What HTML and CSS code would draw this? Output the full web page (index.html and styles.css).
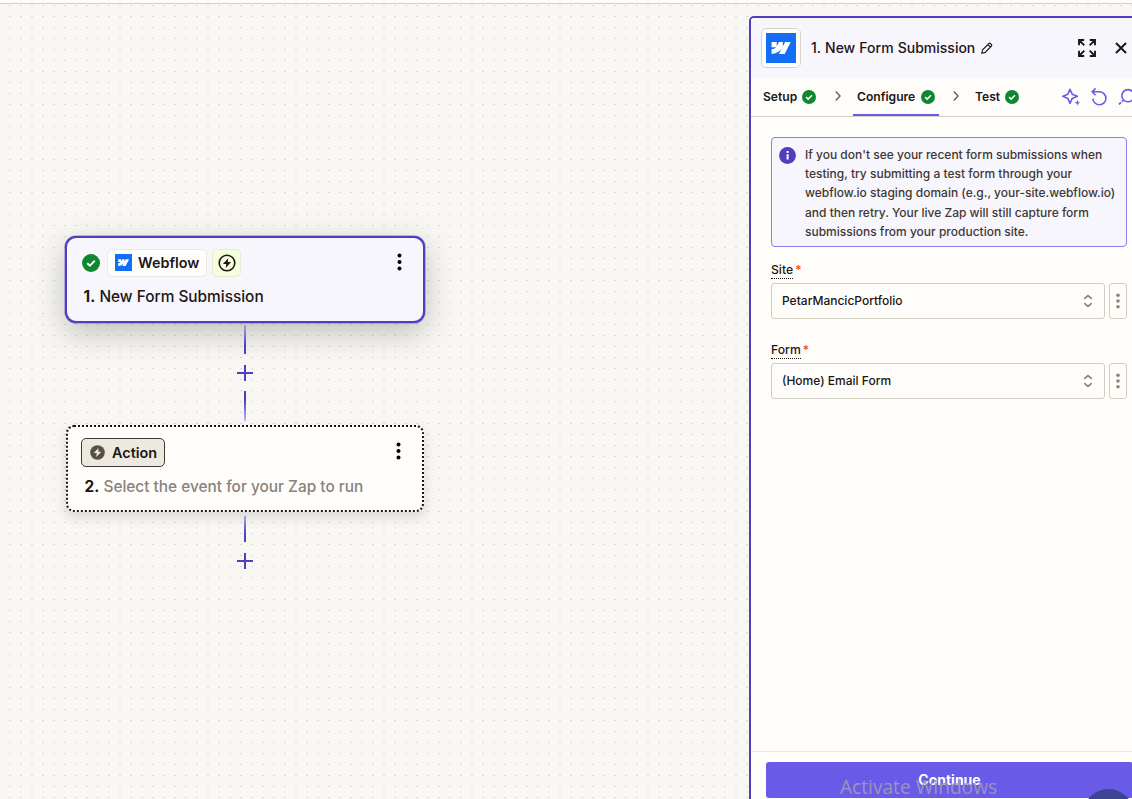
FILE: index.html
```html
<!DOCTYPE html>
<html lang="en">
<head>
<meta charset="utf-8">
<title>Zap editor</title>
<link rel="stylesheet" href="styles.css">
</head>
<body>
<svg class="defs" aria-hidden="true">
  <symbol id="check" viewBox="0 0 18 18"><circle cx="9" cy="9" r="9" fill="#0f8730"/><path d="M5.3 9.2l2.6 2.5 4.9-5" fill="none" stroke="#fff" stroke-width="1.9"/></symbol>
  <symbol id="webflow" viewBox="0 0 30 30"><path d="M0 0h30v30H0z" fill="#146ef5"/><path transform="translate(5.6 5.5) scale(.8)" fill="#fff" d="M24 4.515l-7.658 14.97H9.149l3.205-6.204h-.144C9.566 16.713 5.621 18.973 0 19.485v-6.118s3.596-.213 5.71-2.435H0V4.515h6.417v5.278l.144-.001 2.622-5.277h4.854v5.244h.144l2.72-5.244H24z"/></symbol>
  <symbol id="dots" viewBox="0 0 4 18"><circle cx="2" cy="2.5" r="2"/><circle cx="2" cy="9" r="2"/><circle cx="2" cy="15.5" r="2"/></symbol>
  <symbol id="plus" viewBox="0 0 16 16"><path d="M8 0v16M0 8h16" stroke="#503ebd" stroke-width="2"/></symbol>
  <symbol id="chevron" viewBox="0 0 6 10"><path d="M.8.6L5 5 .8 9.4" fill="none" stroke="#666059" stroke-width="1.4"/></symbol>
  <symbol id="updown" viewBox="0 0 10 14"><path d="M1.2 4.8L5 1.6l3.8 3.2M1.2 9.2L5 12.4l3.8-3.2" fill="none" stroke="#88827e" stroke-width="1.6"/></symbol>
</svg>
<div class="topbar"></div>
<main class="editor">
  <section class="canvas">
    <article class="step selected">
      <div class="step-head">
        <svg class="status"><use href="#check"/></svg>
        <span class="app"><svg><use href="#webflow"/></svg>Webflow</span>
        <span class="trigger"><svg viewBox="0 0 18 18"><circle cx="9" cy="9" r="7.8" fill="none" stroke="#201515" stroke-width="1.6"/><path d="M10.2 4.2L4.9 10h3.3l-.5 3.9L13.1 8H9.8z" fill="#201515"/></svg></span>
        <svg class="more"><use href="#dots"/></svg>
      </div>
      <p class="step-title"><b>1.</b> New Form Submission</p>
    </article>
    <div class="line in"></div>
    <svg class="add"><use href="#plus"/></svg>
    <div class="line out"></div>
    <article class="step empty">
      <div class="step-head">
        <span class="action"><svg viewBox="0 0 15 15"><circle cx="7.5" cy="7.5" r="7.3" fill="#574e4c"/><path d="M8.5 3L3.7 8.1h3l-.4 3.9 5-5.2h-3z" fill="#ece9df"/></svg>Action</span>
        <svg class="more"><use href="#dots"/></svg>
      </div>
      <p class="step-title"><b>2.</b> Select the event for your Zap to run</p>
    </article>
    <div class="line in short"></div>
    <svg class="add"><use href="#plus"/></svg>
  </section>
  <aside class="panel">
    <header class="panel-head">
      <span class="logo"><svg><use href="#webflow"/></svg></span>
      <h1>1. New Form Submission</h1>
      <svg class="pencil" viewBox="0 0 12 12"><path d="M.8 11.2l.8-3.3L8 1.5a1 1 0 0 1 1.4 0l1.1 1.1a1 1 0 0 1 0 1.4L4.1 10.4zM7 2.7L9.3 5" fill="none" stroke="#201515" stroke-width="1.1"/></svg>
      <svg class="expand" viewBox="0 0 18 18"><path d="M6.2 1H1v5.2M1 1l5.3 5.3M11.8 1H17v5.2M17 1l-5.3 5.3M1 11.8V17h5.2M1 17l5.3-5.3M17 11.8V17h-5.2M17 17l-5.3-5.3" fill="none" stroke="#201515" stroke-width="1.9"/></svg>
      <svg class="close" viewBox="0 0 12 12"><path d="M1 1l10 10M11 1L1 11" stroke="#201515" stroke-width="2"/></svg>
    </header>
    <nav class="tabs">
      <span class="tab setup">Setup<svg><use href="#check"/></svg></span>
      <svg class="sep"><use href="#chevron"/></svg>
      <span class="tab active">Configure<svg><use href="#check"/></svg></span>
      <svg class="sep"><use href="#chevron"/></svg>
      <span class="tab test">Test<svg><use href="#check"/></svg></span>
      <span class="tools">
        <svg class="tool" viewBox="0 0 18 18"><path d="M8 1.4L10.2 6.2 15.4 8.3 10.2 10.4 8 15.3 5.8 10.4.9 8.3 5.8 6.2z" fill="none" stroke="#695be8" stroke-width="1.6" stroke-linejoin="round"/><path d="M15.4 12l.8 2.1 2 .7-2 .8-.8 2-.8-2-2-.8 2-.7z" fill="#695be8"/></svg>
        <svg class="tool" viewBox="0 0 18 18"><path d="M2.4 3.8h7.3a6.5 6.5 0 1 1-6.8 6.8M5.6.4L2.2 3.8l3.4 3.4" fill="none" stroke="#695be8" stroke-width="1.6"/></svg>
        <svg class="tool" viewBox="0 0 18 18"><circle cx="10" cy="7.7" r="6.1" fill="none" stroke="#695be8" stroke-width="1.6"/><path d="M5.2 12.4L4 13.6M3 14.4l-2 2" stroke="#695be8" stroke-width="1.8"/></svg>
      </span>
    </nav>
    <div class="form">
      <div class="notice">
        <svg viewBox="0 0 17 17"><circle cx="8.5" cy="8.5" r="8.4" fill="#503ebd"/><path d="M7.6 4h2v2h-2zM7.6 7.2h2v5.4h-2z" fill="#fff"/></svg>
        <p>If you don't see your recent form submissions when<br>testing, try submitting a test form through your<br>webflow.io staging domain (e.g., your-site.webflow.io)<br>and then retry. Your live Zap will still capture form<br>submissions from your production site.</p>
      </div>
      <div class="field">
        <div class="label"><span>Site</span><i>*</i></div>
        <div class="row"><div class="select">PetarMancicPortfolio<svg><use href="#updown"/></svg></div><div class="menu"><svg><use href="#dots"/></svg></div></div>
      </div>
      <div class="field">
        <div class="label"><span>Form</span><i>*</i></div>
        <div class="row"><div class="select">(Home) Email Form<svg><use href="#updown"/></svg></div><div class="menu"><svg><use href="#dots"/></svg></div></div>
      </div>
    </div>
    <footer class="panel-foot"><button class="continue">Continue</button></footer>
  </aside>
</main>
<div class="watermark">Activate Windows</div>
<svg class="help" viewBox="0 0 49 10"><circle cx="25.5" cy="25.5" r="25.5" fill="#3d4592"/></svg>
</body>
</html>
```
FILE: styles.css
```css
* { box-sizing: border-box; }
html { overflow: hidden; }
body { margin: 0; width: 1132px; height: 799px; overflow: hidden; position: relative; display: flex; flex-direction: column; font-family: Inter, "Liberation Sans", sans-serif; color: #201515; background: #f8f7f3; }
svg { display: block; flex: none; }
p, h1 { margin: 0; }
.defs { width: 0; height: 0; position: absolute; }
.topbar { height: 4px; flex: none; background: #fffdf9; border-bottom: 1px solid #d0cfcb; }
.editor {
  flex: 1; min-height: 0; display: flex;
  background-image: radial-gradient(ellipse 1.2px .7px at 1px .5px, #dad9d5 99%, transparent 100%);
  background-size: 11px 11px; background-position: 9px 1px;
}
.canvas { width: 749px; padding: 232px 0 0 65px; display: flex; flex-direction: column; flex: none; }
.step { width: 360px; height: 87px; flex: none; }
.selected { border: 2px solid #503ebd; border-radius: 11px; background: #f7f6fd; box-shadow: 0 0 0 .5px #8577d4, 0 10px 30px rgba(55,50,40,.28); padding: 11px 15px; }
.empty { width: 358px; height: 87px; margin: 4px 0 0 1px; border: 2px dotted #201515; border-radius: 8px; background: #fffdf9; box-shadow: 0 5px 12px rgba(55,50,40,.16); padding: 11px 13px; }
.step-head { display: flex; align-items: center; height: 28px; }
.status { width: 18px; height: 18px; }
.app { height: 28px; width: 100px; margin-left: 7px; padding: 0 0 1px 7px; border: 1px solid #ebe9e4; border-radius: 5px; background: #fffdf9; display: flex; align-items: center; gap: 6px; font-size: 14.4px; font-weight: 600; }
.app svg { width: 17px; height: 17px; }
.trigger { width: 29px; height: 28px; margin-left: 5px; border: 1px solid #e9ebd5; border-radius: 5px; background: #f4ffdd; display: flex; align-items: center; justify-content: center; }
.trigger svg { width: 18px; height: 18px; }
.more { width: 5px; height: 18px; margin: -3px 6.5px 0 auto; }
.empty .more { margin-right: 8.5px; }
.step-title { font-size: 15.4px; line-height: 20px; margin: 10px 0 0 1.5px; font-weight: 500; white-space: nowrap; }
.step-title b { font-weight: 700; }
.empty .step-title { color: #88827e; margin: 11px 0 0 3.5px; }
.empty .step-title b { color: #201515; }
.action { width: 84px; height: 29px; border: 1px solid #403635; border-radius: 5px; background: #ece9df; display: flex; align-items: center; gap: 7px; padding-left: 8px; font-size: 14.4px; font-weight: 600; }
.action svg { width: 15px; height: 15px; }
.line { width: 2px; height: 29px; margin: 2px 0 0 179px; flex: none; }
.line.in { background: linear-gradient(#aaa0e8, #503ebd 70%); }
.line.out { height: 30px; margin-top: 10px; background: linear-gradient(#503ebd 30%, #c0b9ff); }
.line.short { height: 26px; margin-top: 4px; }
.add { width: 16px; height: 16px; margin: 11px 0 0 172px; }
.panel { flex: none; width: 400px; margin-top: 12px; border: 2px solid #503ebd; border-radius: 5px 0 0 0; border-bottom: 0; background: #fffdf9; display: flex; flex-direction: column; overflow: hidden; }
.panel-head { height: 60px; flex: none; background: #f7f6fd; display: flex; align-items: center; padding-left: 10px; }
.logo { width: 40px; height: 40px; border: 1px solid #d7d3c9; border-radius: 5px; background: #fffdf9; padding: 4px; }
.logo svg { width: 30px; height: 30px; }
h1 { font-size: 14px; line-height: 18px; font-weight: 500; margin: -1px 0 0 10px; width: 164px; word-spacing: .4px; white-space: nowrap; }
.pencil { width: 12px; height: 12px; margin-left: 6px; }
.expand { width: 18px; height: 18px; margin-left: 85px; }
.close { width: 12px; height: 12px; margin-left: 19px; }
.tabs { height: 39px; flex: none; border-bottom: 1px solid #d7d3c9; display: flex; padding-left: 8px; }
.tab { display: flex; align-items: center; justify-content: space-between; height: 38px; padding: 0 4px 1px; font-size: 12.1px; font-weight: 600; flex: none; }
.tab svg { width: 14px; height: 14px; margin-top: 1px; }
.setup { width: 61px; }
.active { width: 86px; box-shadow: inset 0 -2px #695be8; }
.test { width: 52px; }
.sep { width: 6px; height: 10px; margin: 13px 12px 0 15px; }
.active + .sep { margin: 13px 12px 0 14px; }
.tools { display: flex; gap: 10px; margin: 10px 0 0 39px; }
.tool { width: 18px; height: 18px; }
.form { padding: 20px 0 0 20px; flex: 1; }
.notice { width: 356px; height: 110px; border: 1px solid #8b7df5; border-radius: 4px; background: #f7f6fd; display: flex; gap: 9px; padding: 7px 0 0 7px; }
.notice svg { width: 17px; height: 17px; margin-top: 1.5px; }
.notice p { font-size: 12px; line-height: 19.2px; font-weight: 500; color: #403635; white-space: nowrap; }
.field { margin-top: 16px; height: 64px; }
.label { height: 20px; display: flex; gap: 2px; align-items: flex-start; font-size: 12.2px; line-height: 14px; font-weight: 500; }
.label span { border-bottom: 1px dotted #201515; height: 16px; }
.label i { color: #ff4f00; font-style: normal; }
.row { display: flex; gap: 4px; }
.select { width: 334px; height: 36px; border: 1px solid #d0cec1; border-radius: 3px; display: flex; align-items: center; justify-content: space-between; padding: 0 11px 1px 10px; font-size: 12px; font-weight: 500; }
.select svg { width: 10px; height: 14px; margin-top: 1px; }
.menu { width: 18px; height: 36px; border: 1px solid #d0cec1; border-radius: 3px; display: flex; align-items: center; justify-content: center; fill: #88827e; }
.menu svg { width: 4px; height: 16px; }
.panel-foot { height: 48px; flex: none; border-top: 1px solid #e8e7e2; padding: 10px 0 0 15px; }
.continue { display: block; width: 367px; height: 36px; border: 0; border-radius: 3px; background: #695be8; color: #fff; font: 700 14px/36px Inter, sans-serif; padding: 0; }
.watermark { position: absolute; left: 840px; top: 774px; font: 400 19.15px/26px "Open Sans", sans-serif; color: #9995b9; white-space: nowrap; }
.help { position: absolute; left: 1083px; top: 789px; width: 49px; height: 10px; }
```
